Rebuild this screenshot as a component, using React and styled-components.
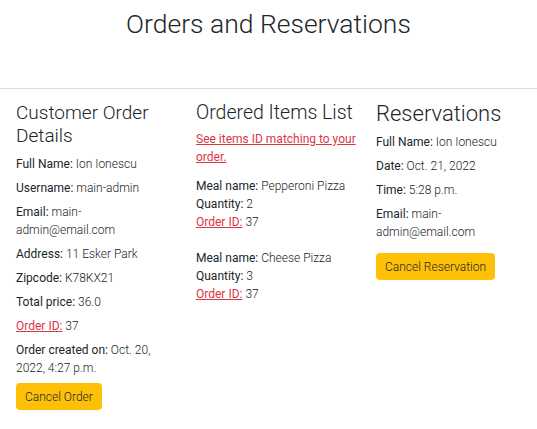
import styled, { createGlobalStyle } from "styled-components";

const GlobalStyle = createGlobalStyle`
    body {
        margin: 0;
        font-family: Roboto, "Liberation Sans", sans-serif;
        color: #212529;
        background: #fff;
        overflow-x: hidden;
    }
`;

const Header = styled.header`
    height: 88px;
    border-bottom: 1px solid #dcdcdc;
    display: flex;
    justify-content: center;
`;

const Title = styled.h1`
    margin: 8px 0 0;
    font-size: 26.5px;
    font-weight: 300;
    line-height: 32px;
`;

const Columns = styled.div`
    display: flex;
    gap: 18px;
    padding: 12px 0 0 16px;
`;

const Column = styled.section`
    width: 162px;
    flex-shrink: 0;
`;

const Heading = styled.h2`
    margin: 0 0 ${(p) => p.$mb ?? 6}px;
    font-size: ${(p) => p.$size ?? 19.5}px;
    line-height: ${(p) => p.$lh ?? 23}px;
    font-weight: 300;
`;

const Line = styled.p`
    margin: 0 0 ${(p) => p.$gap ?? 6}px;
    font-size: 12px;
    line-height: 18px;
    font-weight: 300;
`;

const Label = styled.span`
    font-weight: 400;
`;

const RedLink = styled.a`
    color: #dc3545;
    text-decoration: underline;
    font-weight: 400;
    cursor: pointer;
`;

const ItemBlock = styled.div`
    margin-bottom: 18px;
`;

const Button = styled.button`
    margin-top: ${(p) => p.$offset ?? 0}px;
    background: #ffc107;
    border: none;
    border-radius: 4px;
    padding: 0 9px;
    height: 27px;
    font-family: inherit;
    font-size: 12px;
    font-weight: 300;
    color: #212529;
    cursor: pointer;
`;

const items = [
    { meal: "Pepperoni Pizza", quantity: 2, orderId: 37 },
    { meal: "Cheese Pizza", quantity: 3, orderId: 37 },
];

const App = () => {
    return (
        <>
            <GlobalStyle />
            <Header>
                <Title>Orders and Reservations</Title>
            </Header>
            <Columns>
                <Column>
                    <Heading $size={19} $mb={8}>Customer Order Details</Heading>
                    <Line><Label>Full Name:</Label> Ion Ionescu</Line>
                    <Line><Label>Username:</Label> main-admin</Line>
                    <Line><Label>Email:</Label> main-admin@email.com</Line>
                    <Line><Label>Address:</Label> 11 Esker Park</Line>
                    <Line><Label>Zipcode:</Label> K78KX21</Line>
                    <Line><Label>Total price:</Label> 36.0</Line>
                    <Line><RedLink>Order ID:</RedLink> 37</Line>
                    <Line><Label>Order created on:</Label> Oct. 20, 2022, 4:27 p.m.</Line>
                    <Button>Cancel Order</Button>
                </Column>
                <Column>
                    <Heading>Ordered Items List</Heading>
                    <Line $gap={11}><RedLink>See items ID matching to your order.</RedLink></Line>
                    {items.map((item, i) => (
                        <ItemBlock key={i}>
                            <Line $gap={0}><Label>Meal name:</Label> {item.meal}</Line>
                            <Line $gap={0}><Label>Quantity:</Label> {item.quantity}</Line>
                            <Line $gap={0}><RedLink>Order ID:</RedLink> {item.orderId}</Line>
                        </ItemBlock>
                    ))}
                </Column>
                <Column>
                    <Heading $size={22} $lh={25} $mb={7}>Reservations</Heading>
                    <Line><Label>Full Name:</Label> Ion Ionescu</Line>
                    <Line><Label>Date:</Label> Oct. 21, 2022</Line>
                    <Line><Label>Time:</Label> 5:28 p.m.</Line>
                    <Line><Label>Email:</Label> main-admin@email.com</Line>
                    <Button $offset={6}>Cancel Reservation</Button>
                </Column>
            </Columns>
        </>
    );
};

export default App;
